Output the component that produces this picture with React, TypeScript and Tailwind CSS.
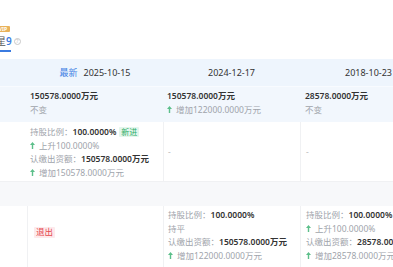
import type { ReactNode } from "react";

const FONT = '"Noto Sans", "Noto Sans CJK SC", sans-serif';

function UpArrow() {
  return (
    <svg width="5" height="7" viewBox="0 0 5 7" className="mr-[4px] inline-block shrink-0">
      <path d="M2.5 0 L5 3 L3.2 3 L3.2 7 L1.8 7 L1.8 3 L0 3 Z" fill="#5cbf8a" />
    </svg>
  );
}

function Line({ children }: { children: ReactNode }) {
  return <div className="flex items-center whitespace-nowrap">{children}</div>;
}

function Label({ children }: { children: ReactNode }) {
  return <span className="text-[#a0a4ab]">{children}</span>;
}

function Value({ children }: { children: ReactNode }) {
  return <span className="font-semibold text-[#333]">{children}</span>;
}

function Change({ text }: { text: string }) {
  return (
    <Line>
      <UpArrow />
      <span className="text-[#a0a4ab]">{text}</span>
    </Line>
  );
}

function Badge({ text }: { text: string }) {
  return (
    <span className="ml-[3px] inline-flex h-[10px] items-center rounded-[1px] bg-[#e4f6ec] px-[2px] text-[8px] leading-none text-[#2fae6a]">
      {text}
    </span>
  );
}

function Dash() {
  return <span className="text-[#bbb]">-</span>;
}

export default function App() {
  return (
    <div
      className="h-[267px] w-[393px] overflow-hidden bg-white text-[8.5px] leading-[13.5px] text-[#333]"
      style={{ fontFamily: FONT }}
    >
      {/* tab strip */}
      <div className="flex h-[59px] flex-col justify-end">
        <div className="flex w-[24px] flex-col pb-[7px]">
          <span className="mb-[2px] ml-[-4px] flex h-[6px] w-[14px] items-center justify-center rounded-[1px] bg-[#e9b25b] text-[5px] font-bold leading-none text-white">
            VIP
          </span>
          <div className="flex items-center">
            <span className="ml-[-4px] text-[10px] leading-[14px] text-[#555]">星</span>
            <span className="text-[10px] font-semibold leading-[14px] text-[#3a7be0]">9</span>
            <span className="ml-[2px] flex h-[7px] w-[7px] items-center justify-center rounded-full border border-[#c8c8c8] text-[5px] leading-none text-[#bbb]">
              ?
            </span>
          </div>
          <div className="mt-[2px] h-[2px] w-[11px] bg-[#3a7be0]" />
        </div>
      </div>

      {/* table */}
      <div className="w-[437px]">
        {/* header */}
        <div className="grid h-[27px] grid-cols-[27px_136px_137px_137px] items-center bg-[#eef5fd] text-[9px]">
          <div />
          <div className="flex items-center justify-center">
            <span className="mr-[6px] text-[#3d7fe4]">最新</span>
            <span className="text-[#333]">2025-10-15</span>
          </div>
          <div className="text-center text-[#333]">2024-12-17</div>
          <div className="text-center text-[#333]">2018-10-23</div>
        </div>

        {/* registered capital */}
        <div className="grid grid-cols-[27px_136px_137px_137px] border-t border-[#f8fbff] bg-[#f2f7fd]">
          <div />
          <div className="pt-[2px] pb-[6px] pl-[3px]">
            <Line><Value>150578.0000万元</Value></Line>
            <Line><Label>不变</Label></Line>
          </div>
          <div className="pt-[2px] pb-[6px] pl-[4px]">
            <Line><Value>150578.0000万元</Value></Line>
            <Change text="增加122000.0000万元" />
          </div>
          <div className="pt-[2px] pb-[6px] pl-[5px]">
            <Line><Value>28578.0000万元</Value></Line>
            <Line><Label>不变</Label></Line>
          </div>
        </div>

        {/* shareholder 1 */}
        <div className="grid h-[60px] grid-cols-[27px_136px_137px_137px] border-b border-[#f0f1f3]">
          <div />
          <div className="pt-[3px] pl-[3px]">
            <Line>
              <Label>持股比例：</Label>
              <Value>100.0000%</Value>
              <Badge text="新进" />
            </Line>
            <Change text="上升100.0000%" />
            <Line>
              <Label>认缴出资额：</Label>
              <Value>150578.0000万元</Value>
            </Line>
            <Change text="增加150578.0000万元" />
          </div>
          <div className="flex items-center border-l border-[#f0f1f3] pl-[4px]">
            <Dash />
          </div>
          <div className="flex items-center border-l border-[#f0f1f3] pl-[5px]">
            <Dash />
          </div>
        </div>

        {/* group row */}
        <div className="h-[24px] bg-[#f7f8fa]" />

        {/* shareholder 2 */}
        <div className="grid grid-cols-[27px_136px_137px_137px]">
          <div />
          <div className="flex flex-col justify-center border-l border-[#f0f1f3] pb-[10px] pl-[6px]">
            <div className="flex">
              <span className="inline-flex h-[11px] items-center rounded-[1px] bg-[#fdeaec] px-[2px] text-[8.5px] leading-none text-[#e5484d]">
                退出
              </span>
            </div>
          </div>
          <div className="border-l border-[#f0f1f3] pt-[2px] pb-[6px] pl-[4px]">
            <Line>
              <Label>持股比例：</Label>
              <Value>100.0000%</Value>
            </Line>
            <Line><Label>持平</Label></Line>
            <Line>
              <Label>认缴出资额：</Label>
              <Value>150578.0000万元</Value>
            </Line>
            <Change text="增加122000.0000万元" />
          </div>
          <div className="border-l border-[#f0f1f3] pt-[2px] pb-[6px] pl-[5px]">
            <Line>
              <Label>持股比例：</Label>
              <Value>100.0000%</Value>
              <Badge text="新进" />
            </Line>
            <Change text="上升100.0000%" />
            <Line>
              <Label>认缴出资额：</Label>
              <Value>28578.0000万元</Value>
            </Line>
            <Change text="增加28578.0000万元" />
          </div>
        </div>
      </div>
    </div>
  );
}
